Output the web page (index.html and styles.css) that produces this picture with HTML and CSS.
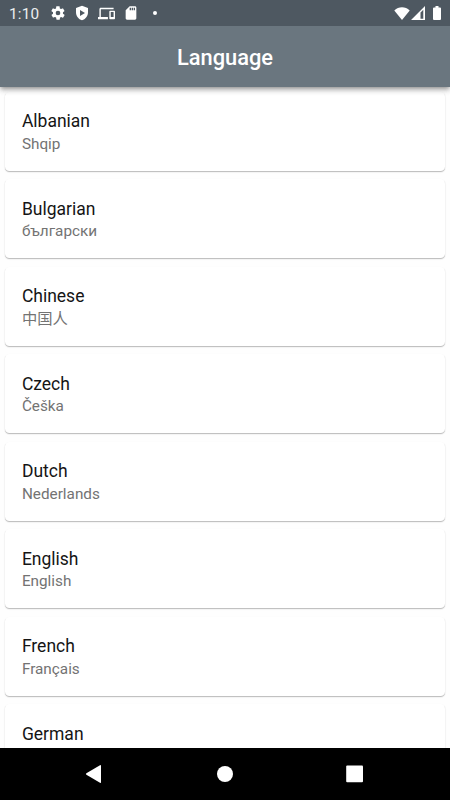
FILE: index.html
```html
<!DOCTYPE html>
<html lang="en">
<head>
<meta charset="utf-8">
<title>Language</title>
<link rel="stylesheet" href="styles.css">
</head>
<body>
<div class="screen">
  <header class="top">
    <div class="status">
      <span class="clock">1:10</span>
      <svg class="icon gear" viewBox="0 0 24 24"><path fill-rule="evenodd" d="M19.4 13c0-.3.1-.6.1-1s0-.7-.1-1l2.1-1.600c.2-.2.2-.4.1-.6l-2-3.500c-.1-.2-.4-.3-.6-.2l-2.500 1c-.5-.4-1.100-.7-1.700-1l-.4-2.600c0-.3-.2-.5-.5-.5h-4c-.2 0-.4.200-.5.400l-.4 2.700c-.6.200-1.100.6-1.700 1l-2.500-1c-.2-.1-.5 0-.6.2l-2 3.500c-.1.200-.1.500.1.600L4.600 11c0 .3-.1.600-.1 1s0 .7.100 1l-2.100 1.600c-.2.200-.2.400-.1.600l2 3.500c.1.200.4.300.6.200l2.500-1c.5.400 1.100.7 1.700 1l.4 2.600c0 .3.2.5.5.5h4c.2 0 .5-.2.5-.4l.4-2.600c.6-.3 1.200-.6 1.700-1l2.500 1c.2.100.5 0 .6-.2l2-3.500c.1-.2.1-.5-.1-.6zM12 15.500a3.500 3.500 0 1 1 0-7 3.500 3.500 0 0 1 0 7z"/></svg>
      <svg class="icon shield" viewBox="0 0 24 24"><path fill-rule="evenodd" d="M12 1 3 4.500V11c0 5.600 3.800 10.700 9 12 5.200-1.300 9-6.400 9-12V4.500zM9 7.500l7.500 4.500L9 16.500z"/></svg>
      <svg class="icon devices" viewBox="0 0 24 24"><path fill-rule="evenodd" d="M4 6h18V4H4c-1.100 0-2 .9-2 2v11H0v3h14v-3H4zm19 2h-6c-.6 0-1 .4-1 1v10c0 .6.400 1 1 1h6c.6 0 1-.4 1-1V9c0-.6-.4-1-1-1zm-1 9h-4v-7h4z"/></svg>
      <svg class="icon card-icon" viewBox="0 0 24 24"><path fill-rule="evenodd" d="M18 2h-8L4 8v12c0 1.100.9 2 2 2h12c1.100 0 2-.9 2-2V4c0-1.100-.9-2-2-2zm-6 6h-2V4h2zm3 0h-2V4h2zm3 0h-2V4h2z"/></svg>
      <span class="dot"></span>
      <svg class="wifi" viewBox="0 0 16 13"><path d="M8 13 .3 3.400C2.500 1.400 5.200.3 8 .3s5.500 1.100 7.700 3.100z"/></svg>
      <svg class="signal" viewBox="0 0 14 14"><path fill-rule="evenodd" d="M0 14 14 0v14zM9.500 6.500V12.700H12.300V3.700z"/></svg>
      <svg class="battery" viewBox="0 0 8 14"><path d="M2.500 0h3v1.500H7q1 0 1 1V13q0 1-1 1H1q-1 0-1-1V2.500q0-1 1-1h1.500z"/></svg>
    </div>
    <h1 class="title">Language</h1>
  </header>
  <main class="list">
    <section class="card"><div class="name">Albanian</div><div class="native">Shqip</div></section>
    <section class="card"><div class="name">Bulgarian</div><div class="native">български</div></section>
    <section class="card"><div class="name">Chinese</div><div class="native">中国人</div></section>
    <section class="card"><div class="name">Czech</div><div class="native">Češka</div></section>
    <section class="card"><div class="name">Dutch</div><div class="native">Nederlands</div></section>
    <section class="card"><div class="name">English</div><div class="native">English</div></section>
    <section class="card"><div class="name">French</div><div class="native">Français</div></section>
    <section class="card"><div class="name">German</div></section>
  </main>
  <nav class="nav">
    <svg viewBox="0 0 20 20"><path d="M1.400 9.300 15 1.200q1-.5 1 .5v16.600q0 1-1 .5L1.400 10.700q-1-.7 0-1.400z"/></svg>
    <svg viewBox="0 0 20 20"><circle cx="10" cy="10" r="8"/></svg>
    <svg viewBox="0 0 20 20"><rect x="1.200" y="1.500" width="16.800" height="16.800" rx="1"/></svg>
  </nav>
</div>
</body>
</html>
```

FILE: styles.css
```css
* { box-sizing: border-box; }
body { margin: 0; }
.screen {
  width: 450px;
  height: 800px;
  display: flex;
  flex-direction: column;
  overflow: hidden;
  background: #fefefe;
  font-family: Roboto, "Noto Sans CJK SC", sans-serif;
}
svg { display: block; fill: #fff; flex: none; }
.top {
  flex: none;
  height: 87px;
  background: #6a767f;
  z-index: 1;
  box-shadow: 0 2px 4px -1px rgba(0,0,0,.3), 0 4px 5px rgba(0,0,0,.14), 0 1px 8px rgba(0,0,0,.1);
}
.status {
  height: 26px;
  display: flex;
  align-items: center;
  padding: 0 9px 0 9px;
  background: #4e5861;
}
.clock {
  width: 41px;
  padding-top: 1px;
  font-size: 15.3px;
  letter-spacing: .2px;
  color: #eceeef;
}
.icon { width: 16px; height: 16px; }
.shield { margin-left: 8px; }
.devices { width: 17px; height: 17px; margin-left: 8px; }
.card-icon { margin-left: 8px; }
.dot {
  width: 4px;
  height: 4px;
  margin-left: 14px;
  border-radius: 50%;
  background: #fff;
}
.wifi { width: 16px; height: 13px; margin-left: auto; }
.signal { width: 14px; height: 14px; margin-left: 1px; }
.battery { width: 8px; height: 14px; margin-left: 8px; }
.title {
  margin: 0;
  height: 61px;
  line-height: 63px;
  text-align: center;
  font-size: 21.875px;
  font-weight: 500;
  color: #fff;
}
.list {
  flex: 1;
  min-height: 0;
  overflow: hidden;
}
.card {
  height: 78.75px;
  margin: 4.800px 4.600px 8.75px;
  padding: 19.450px 17.300px 0;
  border-radius: 4.375px;
  background: #fff;
  box-shadow: 0 1px 1px rgba(0,0,0,.22), 0 1px 2px rgba(0,0,0,.08);
}
.name {
  line-height: 20px;
  font-size: 17.5px;
  color: #151515;
}
.native {
  margin-top: 2.500px;
  line-height: 20px;
  font-size: 15.3125px;
  color: #737373;
}
.nav {
  flex: none;
  height: 52.500px;
  display: flex;
  justify-content: center;
  align-items: center;
  gap: 110px;
  background: #000;
}
.nav svg { width: 20px; height: 20px; }
```
